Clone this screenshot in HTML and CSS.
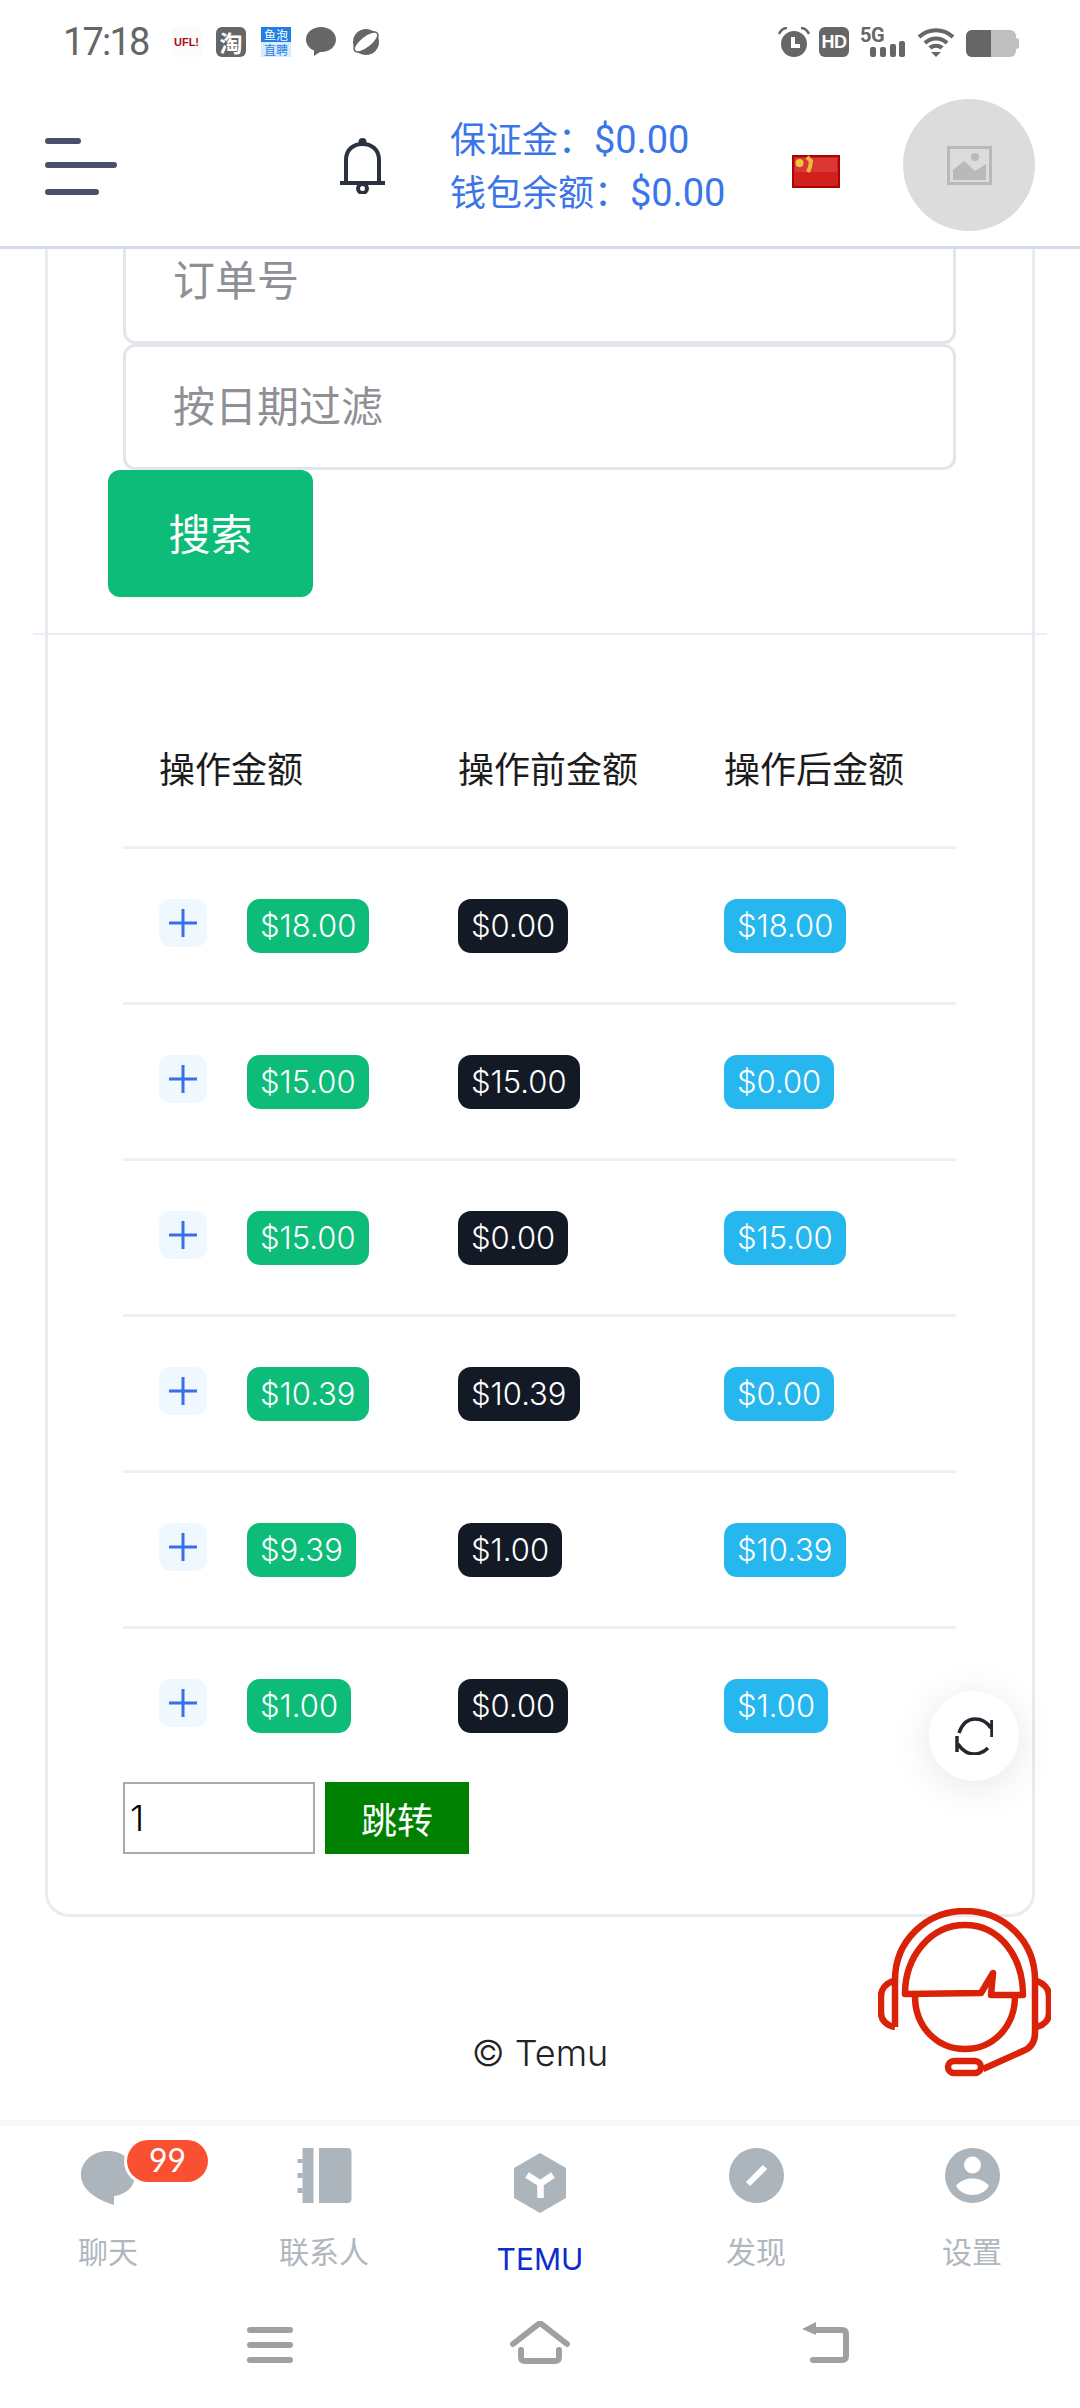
FILE: index.html

```html
<!DOCTYPE html>
<html>
<head>
  <title>Temu</title>
  <link rel="stylesheet" href="styles.css">
</head>
<body>

<div class="page">

  <header class="top">
    <div class="status-bar">
      <span class="time">17:18</span>
      <span class="app-ufl">UFL!</span>
      <span class="app-tao">淘</span>
      <span class="app-yupao"><b>鱼泡</b><i>直聘</i></span>
      <svg class="app-icon" viewBox="0 0 30 30"><path d="M15 0C7 0 0 5 0 12.500C0 18 4 22 8 23.500L8 29L14 25C23 25.500 30 20 30 12.500C30 5 23 0 15 0Z"/></svg>
      <svg class="app-icon" viewBox="0 0 30 30"><circle cx="15" cy="15" r="13"/><ellipse cx="15" cy="15" rx="15" ry="7.500" transform="rotate(-38 15 15)"/><ellipse class="planet-band" cx="15" cy="15" rx="13.500" ry="5" transform="rotate(-38 15 15)"/></svg>

      <div class="status-right">
        <svg class="st-alarm" viewBox="0 0 32 30"><circle cx="16" cy="17" r="13"/><path class="st-white" d="M15 10V19H22"/><path class="st-ear" d="M1 7C3 3 6 1 9 1M31 7C29 3 26 1 23 1"/></svg>
        <span class="st-hd">HD</span>
        <span class="st-signal">
          <span class="st-5g">5G</span>
          <svg viewBox="0 0 35 16"><rect x="0" y="6" width="6" height="10" rx="2"/><rect x="10" y="6" width="6" height="10" rx="2"/><rect x="20" y="3" width="6" height="13" rx="2"/><rect x="29" y="0" width="6" height="16" rx="2"/></svg>
        </span>
        <svg class="st-wifi" viewBox="0 0 38 30"><path d="M2 10C12 1 26 1 36 10M8 16C14 10 24 10 30 16M13 21C16 18 22 18 25 21"/><polygon points="14,25 24,25 19,30"/></svg>
        <span class="st-battery"><span class="st-battery-fill"></span></span>
      </div>
    </div>

    <div class="navbar">
      <svg class="menu-icon" viewBox="0 0 72 57"><path d="M3 3H33M3 27H69M3 54H51"/></svg>
      <svg class="bell-icon" viewBox="0 0 45 57"><circle class="bell-knob" cx="22.500" cy="5" r="4"/><path d="M6 46V23C6 12 14 7 22.500 7C31 7 39 12 39 23V46M0 46H45"/><circle cx="22.500" cy="51.500" r="4.500"/></svg>
      <div class="balance">
        <div>保证金：<span class="money">$0.00</span></div>
        <div>钱包余额：<span class="money">$0.00</span></div>
      </div>
      <svg class="flag" viewBox="0 0 48 33">
        <rect x="1" y="1" width="46" height="31" fill="#d3201c" stroke="#a80404" stroke-width="2"/>
        <rect x="3" y="3" width="42" height="14" fill="#e2504c" opacity="0.5"/>
        <circle cx="7.500" cy="8" r="4" fill="#f2c43a"/>
        <path d="M15 2L19 6L18 12L16 17" fill="none" stroke="#efb838" stroke-width="4"/>
      </svg>
      <div class="avatar">
        <svg viewBox="0 0 45 39"><rect x="1.500" y="1.500" width="42" height="36" fill="none" stroke="#b9b9b9" stroke-width="3"/><circle cx="28" cy="11" r="4" fill="#b9b9b9"/><path d="M6 34V24L17 15L28 25L39 18V34Z" fill="#b9b9b9"/></svg>
      </div>
    </div>
  </header>

  <main class="content">
    <div class="card">
      <div class="filter-form">
        <input class="filter-input" type="text" placeholder="订单号">
        <input class="filter-input" type="text" placeholder="按日期过滤">
        <button class="btn-search">搜索</button>
      </div>
      <div class="divider"></div>

      <div class="table-wrap">
        <table class="log-table">
          <thead>
            <tr>
              <th class="col-amount">操作金额</th>
              <th class="col-before">操作前金额</th>
              <th class="col-after">操作后金额</th>
            </tr>
          </thead>
          <tbody>
            <tr>
              <td><div class="amount-cell"><span class="plus-box"><svg viewBox="0 0 28 28"><path d="M0 14H28M14 0V28"/></svg></span><span class="tag tag-green">$18.00</span></div></td>
              <td><span class="tag tag-dark">$0.00</span></td>
              <td><span class="tag tag-blue">$18.00</span></td>
            </tr>
            <tr>
              <td><div class="amount-cell"><span class="plus-box"><svg viewBox="0 0 28 28"><path d="M0 14H28M14 0V28"/></svg></span><span class="tag tag-green">$15.00</span></div></td>
              <td><span class="tag tag-dark">$15.00</span></td>
              <td><span class="tag tag-blue">$0.00</span></td>
            </tr>
            <tr>
              <td><div class="amount-cell"><span class="plus-box"><svg viewBox="0 0 28 28"><path d="M0 14H28M14 0V28"/></svg></span><span class="tag tag-green">$15.00</span></div></td>
              <td><span class="tag tag-dark">$0.00</span></td>
              <td><span class="tag tag-blue">$15.00</span></td>
            </tr>
            <tr>
              <td><div class="amount-cell"><span class="plus-box"><svg viewBox="0 0 28 28"><path d="M0 14H28M14 0V28"/></svg></span><span class="tag tag-green">$10.39</span></div></td>
              <td><span class="tag tag-dark">$10.39</span></td>
              <td><span class="tag tag-blue">$0.00</span></td>
            </tr>
            <tr>
              <td><div class="amount-cell"><span class="plus-box"><svg viewBox="0 0 28 28"><path d="M0 14H28M14 0V28"/></svg></span><span class="tag tag-green">$9.39</span></div></td>
              <td><span class="tag tag-dark">$1.00</span></td>
              <td><span class="tag tag-blue">$10.39</span></td>
            </tr>
            <tr class="last-row">
              <td><div class="amount-cell"><span class="plus-box"><svg viewBox="0 0 28 28"><path d="M0 14H28M14 0V28"/></svg></span><span class="tag tag-green">$1.00</span></div></td>
              <td><span class="tag tag-dark">$0.00</span></td>
              <td><span class="tag tag-blue">$1.00</span></td>
            </tr>
          </tbody>
        </table>
      </div>

      <div class="pager">
        <input class="pager-input" type="text" value="1">
        <button class="pager-btn">跳转</button>
      </div>
    </div>

    <footer class="copyright">© Temu</footer>
  </main>

  <nav class="tabbar">
    <div class="tab">
      <div class="tab-icon">
        <svg class="chat-icon" viewBox="0 0 54 57"><path d="M27 3C12 3 0 13 0 27C0 41 14 51 33 57V48C44 47 54 39 54 27C54 13 42 3 27 3Z"/></svg>
        <span class="unread">99</span>
      </div>
      <span class="tab-label">聊天</span>
    </div>
    <div class="tab">
      <div class="tab-icon">
        <svg viewBox="0 0 54 55"><rect x="5" y="0" width="11" height="55"/><path d="M21.500 0H50C52.500 0 54 1.500 54 4V51C54 53.500 52.500 55 50 55H21.500Z"/><rect x="0" y="11" width="5" height="4"/><rect x="0" y="25" width="5" height="5"/><rect x="0" y="40" width="5" height="5"/></svg>
      </div>
      <span class="tab-label">联系人</span>
    </div>
    <div class="tab tab-active">
      <div class="tab-icon">
        <svg viewBox="0 0 52 60"><polygon points="26,0 52,15 52,45 26,60 0,45 0,15"/><path class="hex-mark" d="M13 22L26.500 30.500L39 22M26.500 30V45"/></svg>
      </div>
      <span class="tab-label">TEMU</span>
    </div>
    <div class="tab">
      <div class="tab-icon">
        <svg viewBox="0 0 55 55"><circle cx="27.500" cy="27.500" r="27.500"/><path class="slash" d="M19 36L36 19"/></svg>
      </div>
      <span class="tab-label">发现</span>
    </div>
    <div class="tab">
      <div class="tab-icon">
        <svg viewBox="0 0 55 55"><circle cx="27.500" cy="27.500" r="27.500"/><circle class="white-fill" cx="27.500" cy="17" r="8.500"/><path class="white-fill" d="M11 38C18 28 37 28 44 38C37 50 18 50 11 38Z"/></svg>
      </div>
      <span class="tab-label">设置</span>
    </div>
  </nav>

  <div class="sys-nav">
    <svg class="sys-menu" viewBox="0 0 46 36"><path d="M3 3H43M3 18H43M3 33H43"/></svg>
    <svg class="sys-home" viewBox="0 0 60 44"><path d="M3 23L30 2L57 23M11 29V36Q11 40 15 40H45Q49 40 49 36V29"/></svg>
    <svg class="sys-back" viewBox="0 0 48 42"><polygon class="sys-arrow" points="15,1 15,14 1,8"/><path d="M14 9H41Q45 9 45 13V35Q45 39 41 39H12"/></svg>
  </div>

  <button class="refresh-btn">
    <svg viewBox="0 0 38 38"><path d="M4 16C7 7 13 2 20 2C27 2 32 5 36 11M37 3V20M33 31C29 35 25 37 19 37C12 37 7 33 3 27M2 19V35"/></svg>
  </button>

  <svg class="service-icon" viewBox="0 0 173 169">
    <path d="M17 119V72C17 33 48 3 87 3C126 3 157 33 157 72V125C157 134 153 140 145 143L105 161"/>
    <path d="M15 73C7 76 3 82 3 88V105C3 112 9 118 17 119M159 73C167 76 171 82 171 88V105C171 112 166 117 159 119"/>
    <path d="M27 86C27 49 52 17 87 17C122 17 145 49 145 87H113L115 65L103 85Z"/>
    <path d="M37 88C37 120 60 141 87 141C114 141 137 120 137 88"/>
    <rect x="70" y="153" width="33" height="12" rx="6"/>
  </svg>

</div>

</body>
</html>
```

FILE: styles.css

```css
* { box-sizing: border-box; }
html, body { margin: 0; padding: 0; background: #fff; }
body { font-family: Inter, "Noto Sans CJK SC", sans-serif; color: #1c1c1c; }
input, button { font-family: inherit; }

.page { position: relative; width: 1080px; height: 2408px; overflow: hidden; display: flex; flex-direction: column; background: #fff; }

/* top */
.top { flex: none; z-index: 2; background: #fff; border-bottom: 3px solid #d3dce6; }
.status-bar { height: 84px; padding: 27px 61px 0 63px; display: flex; align-items: flex-start; }
.time { font: 38px/30px Roboto, sans-serif; color: #666; letter-spacing: -1.800px; width: 109px; }
.app-ufl { width: 29px; height: 30px; margin-right: 15px; background: #fdfbfa; color: #a50f14; font: bold 11px/30px "Liberation Sans", sans-serif; text-align: center; }
.app-tao { width: 30px; height: 30px; margin-right: 15px; background: #666; border-radius: 6px; color: #fff; font: bold 23px/30px "Noto Sans CJK SC", sans-serif; text-align: center; }
.app-yupao { width: 30px; height: 30px; margin-right: 15px; display: flex; flex-direction: column; font: 12px/15px "Noto Sans CJK SC", sans-serif; text-align: center; }
.app-yupao b { font-weight: 400; background: #1f7fe6; color: #fff; }
.app-yupao i { font-style: normal; background: #d9ebfb; color: #1f7fe6; }
.app-icon { width: 30px; height: 30px; margin-right: 15px; fill: #666; }
.app-icon .planet-band { fill: #fff; }

.status-right { margin-left: auto; display: flex; align-items: flex-start; }
.st-alarm { width: 32px; height: 30px; margin-right: 9px; fill: #666; }
.st-white { fill: none; stroke: #fff; stroke-width: 4; }
.st-ear { fill: none; stroke: #666; stroke-width: 2.500; }
.st-hd { width: 30px; height: 30px; margin-right: 11px; background: #666; border-radius: 6px; color: #fff; font: bold 18px/30px "Liberation Sans", sans-serif; letter-spacing: -0.500px; text-align: center; }
.st-signal { position: relative; width: 45px; height: 30px; margin-right: 12px; display: flex; align-items: flex-end; justify-content: flex-end; }
.st-signal svg { width: 35px; height: 16px; fill: #666; }
.st-5g { position: absolute; left: 0; top: 0; font: bold 20px/16px Roboto, sans-serif; letter-spacing: -0.500px; color: #666; }
.st-wifi { width: 38px; height: 30px; margin-right: 11px; fill: #666; }
.st-wifi path { fill: none; stroke: #666; stroke-width: 4.200; }
.st-battery { position: relative; width: 50px; height: 27px; margin: 3px 3px 0 0; background: #bfbfbf; border-radius: 6px; overflow: visible; }
.st-battery-fill { display: block; width: 25px; height: 27px; background: #666; border-radius: 6px 0 0 6px; }
.st-battery::after { content: ""; position: absolute; right: -3px; top: 8px; width: 3px; height: 11px; background: #bfbfbf; border-radius: 0 3px 3px 0; }

.navbar { height: 162px; padding: 0 45px; display: flex; align-items: center; }
.menu-icon { width: 72px; height: 57px; margin-top: 3px; fill: none; stroke: #4a4f6a; stroke-width: 6; stroke-linecap: round; }
.bell-icon { width: 45px; height: 57px; margin-left: 223px; fill: none; stroke: #2a3240; stroke-width: 4; }
.bell-knob { fill: #2a3240; stroke: none; }
.balance { margin: 3px 0 0 65px; color: #3b76e8; font-size: 36px; line-height: 53px; }
.money { font-family: Roboto, sans-serif; font-size: 38px; }
.flag { width: 48px; height: 33px; margin: 13px 0 0 auto; }
.avatar { width: 132px; height: 132px; margin-left: 63px; border-radius: 50%; background: #dcdcdc; display: flex; align-items: center; justify-content: center; }
.avatar svg { width: 45px; height: 39px; }

/* content */
.content { flex: 1; min-height: 0; }
.card { margin: -60px 45px 0; border: 3px solid #e9ebf2; border-radius: 24px; padding-bottom: 60px; }
.filter-form { padding-top: 26px; }
.filter-input { display: block; width: 833px; height: 126px; margin-left: 75px; padding: 0 47px 2px; border: 3px solid #e2e5ea; border-radius: 12px; background: #fff; font-size: 42px; outline: none; }
.filter-input::placeholder { color: #8e9096; opacity: 1; }
.btn-search { display: block; width: 205px; height: 127px; margin: 0 0 36px 60px; padding: 0 0 5px; border: 0; border-radius: 12px; background: #0cbc78; color: #fff; font-size: 42px; }
.divider { height: 2px; margin: 0 -15px; background: #eceef3; }

.table-wrap { padding: 58px 0 0 75px; }
.log-table { width: 833px; table-layout: fixed; border-collapse: separate; border-spacing: 0; }
.col-amount { width: 299px; }
.col-before { width: 266px; }
.col-after { width: 268px; }
.log-table th, .log-table td { height: 156px; padding: 0 0 0 36px; border-bottom: 3px solid #eef0f6; text-align: left; vertical-align: middle; }
.log-table th { padding-bottom: 6px; font-size: 36px; font-weight: 400; color: #1c1c1c; }
.log-table .last-row td { height: 153px; border-bottom: 0; }

.amount-cell { display: flex; align-items: flex-start; gap: 40px; }
.plus-box { width: 48px; height: 48px; border-radius: 12px; background: #eff7ff; display: flex; align-items: center; justify-content: center; }
.plus-box svg { width: 28px; height: 28px; fill: none; stroke: #3b6fe8; stroke-width: 3; }
.tag { display: inline-block; height: 54px; padding: 0 13px; border-radius: 13px; color: #fff; font-size: 31px; font-weight: 300; line-height: 54px; }
.tag-green { background: #0cbc78; }
.tag-dark { background: #131a25; }
.tag-blue { background: #27b7ef; }

.pager { margin-left: 75px; display: flex; gap: 10px; }
.pager-input { width: 192px; height: 72px; padding: 0 5px; border: 2px solid #aaa; background: #fff; color: #000; font-size: 36px; font-weight: 300; outline: none; }
.pager-btn { width: 144px; height: 72px; border: 0; background: #008000; color: #fff; font-size: 36px; }

.copyright { padding-top: 116px; text-align: center; font-size: 36px; font-weight: 300; line-height: 40px; color: #222; }

/* bottom tabs */
.tabbar { flex: none; height: 170px; border-top: 6px solid #f4f8f6; display: flex; background: #fff; }
.tab { flex: 1; padding-top: 22px; display: flex; flex-direction: column; align-items: center; }
.tab-icon { position: relative; height: 55px; display: flex; justify-content: center; }
.tab-icon svg { display: block; width: 55px; height: 55px; fill: #adb5bc; }
.tab-icon .chat-icon { width: 54px; height: 57px; }
.tab-label { margin-top: 29px; font-size: 30px; line-height: 40px; color: #b0b7be; }
.tab-active { padding-top: 27px; }
.tab-active .tab-icon { height: 60px; }
.tab-active .tab-icon svg { width: 52px; height: 60px; }
.tab-active .tab-label { margin-top: 26px; color: #0b2ccc; }
.hex-mark { fill: none; stroke: #fff; stroke-width: 6.500; }
.slash { fill: none; stroke: #fff; stroke-width: 6; }
.white-fill { fill: #fff; }
.unread { position: absolute; left: 46px; top: -8px; width: 81px; height: 42px; border-radius: 21px; background: #fa5032; box-shadow: 0 0 0 3px #fff; color: #fff; font: 32px/40px Lato, sans-serif; text-align: center; }

/* system nav */
.sys-nav { flex: none; height: 118px; padding: 31px 0 0 247px; display: flex; align-items: flex-start; }
.sys-nav svg { fill: none; stroke: #a0a0a0; stroke-width: 6; stroke-linecap: round; stroke-linejoin: round; }
.sys-menu { width: 46px; height: 36px; margin: 6px 0 0 0; }
.sys-home { width: 60px; height: 44px; margin: 0 0 0 217px; }
.sys-back { width: 48px; height: 42px; margin: 0 0 0 231px; }
.sys-nav .sys-arrow { fill: #a0a0a0; stroke: none; }

/* floating */
.refresh-btn { position: absolute; left: 929px; top: 1691px; width: 90px; height: 90px; padding: 0; border: 0; border-radius: 50%; background: #fff; box-shadow: 0 6px 40px rgba(0,0,0,0.1); display: flex; align-items: center; justify-content: center; }
.refresh-btn svg { width: 38px; height: 38px; fill: none; stroke: #26262e; stroke-width: 3.500; }
.service-icon { position: absolute; left: 878px; top: 1908px; width: 173px; height: 169px; fill: none; stroke: #da2208; stroke-width: 6.500; stroke-linejoin: round; }
```
